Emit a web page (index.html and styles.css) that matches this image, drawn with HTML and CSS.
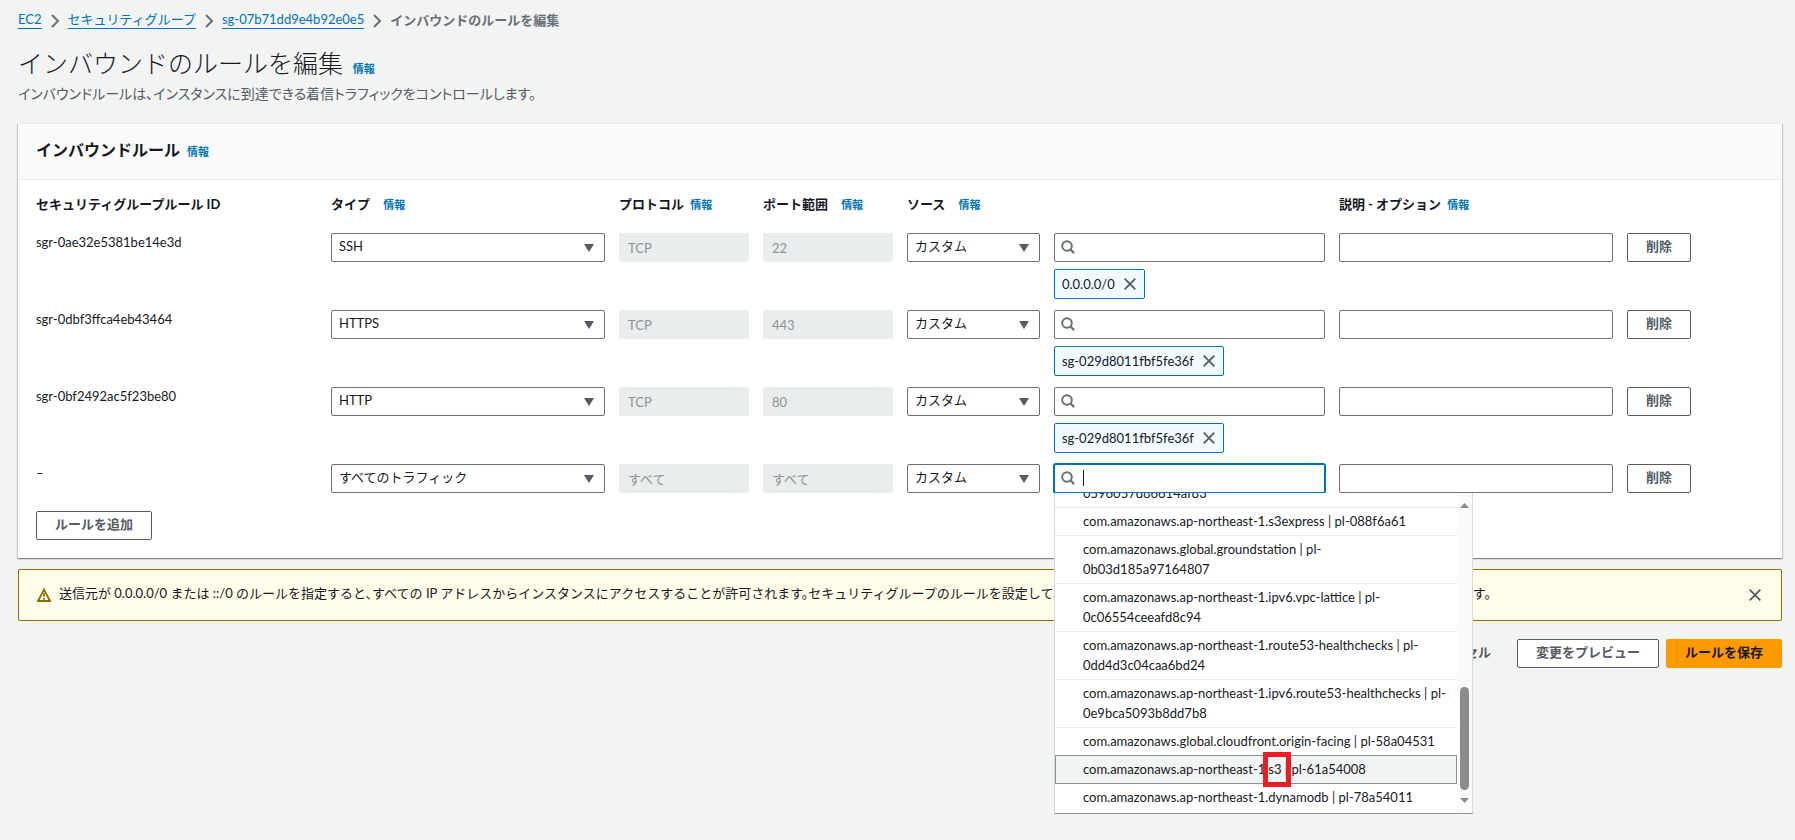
FILE: index.html
```html
<!DOCTYPE html>
<html lang="ja">
<head>
<meta charset="utf-8">
<meta name="viewport" content="width=device-width, initial-scale=1">
<title>インバウンドのルールを編集</title>
<link rel="stylesheet" href="styles.css">
</head>
<body>
<svg class="defs" aria-hidden="true">
  <symbol id="chevron" viewBox="0 0 8 14"><path d="M1 1l6 6-6 6" fill="none" stroke="currentColor" stroke-width="2"/></symbol>
  <symbol id="caret" viewBox="0 0 10 8"><path d="M0 0h10L5 8z" fill="currentColor"/></symbol>
  <symbol id="search" viewBox="0 0 14 14"><circle cx="6" cy="6" r="4.8" fill="none" stroke="currentColor" stroke-width="2"/><path d="M9.3 9.300l3.800 3.800" fill="none" stroke="currentColor" stroke-width="2.200"/></symbol>
  <symbol id="close" viewBox="0 0 12 12"><path d="M.7.7l10.6 10.6M11.3.7L.7 11.3" fill="none" stroke="currentColor" stroke-width="1.8"/></symbol>
  <symbol id="warning" viewBox="0 0 14 14"><path d="M7 1.6L13 13H1z" fill="none" stroke="currentColor" stroke-width="1.8"/><path d="M7 5.2v3.6M7 10v1.8" fill="none" stroke="currentColor" stroke-width="1.8"/></symbol>
</svg>

<nav class="breadcrumbs" aria-label="パンくずリスト">
  <a href="#">EC2</a>
  <svg class="chevron"><use href="#chevron"/></svg>
  <a href="#">セキュリティグループ</a>
  <svg class="chevron"><use href="#chevron"/></svg>
  <a href="#">sg-07b71dd9e4b92e0e5</a>
  <svg class="chevron"><use href="#chevron"/></svg>
  <span class="current">インバウンドのルールを編集</span>
</nav>

<main>
  <header class="page-header">
    <h1>インバウンドのルールを編集 <a class="info" href="#">情報</a></h1>
    <p>インバウンドルールは、インスタンスに到達できる着信トラフィックをコントロールします。</p>
  </header>

  <section class="card">
    <h2>インバウンドルール <a class="info" href="#">情報</a></h2>
    <div class="card-body">
      <table class="rules">
        <colgroup>
          <col class="c-id"><col class="c-type"><col class="c-short"><col class="c-short"><col class="c-source"><col class="c-search"><col class="c-type"><col class="c-action"><col>
        </colgroup>
        <thead>
          <tr>
            <th>セキュリティグループルール ID</th>
            <th>タイプ <a class="info wide" href="#">情報</a></th>
            <th>プロトコル <a class="info" href="#">情報</a></th>
            <th>ポート範囲 <a class="info wide" href="#">情報</a></th>
            <th colspan="2">ソース <a class="info wide" href="#">情報</a></th>
            <th>説明 - オプション <a class="info" href="#">情報</a></th>
            <td colspan="2"></td>
          </tr>
        </thead>
        <tbody>
          <tr>
            <td>sgr-0ae32e5381be14e3d</td>
            <td><div class="field"><select aria-label="タイプ"><option>SSH</option></select><svg class="caret"><use href="#caret"/></svg></div></td>
            <td><input class="input" aria-label="プロトコル" value="TCP" disabled></td>
            <td><input class="input" aria-label="ポート範囲" value="22" disabled></td>
            <td><div class="field"><select aria-label="ソース"><option>カスタム</option></select><svg class="caret"><use href="#caret"/></svg></div></td>
            <td>
              <div class="field"><input class="input search" type="text" aria-label="ソースを検索"><svg class="glass"><use href="#search"/></svg></div>
              <span class="token">0.0.0.0/0<button type="button" aria-label="0.0.0.0/0 を削除"><svg><use href="#close"/></svg></button></span>
            </td>
            <td><input class="input" type="text" aria-label="説明"></td>
            <td><button class="button" type="button">削除</button></td>
            <td></td>
          </tr>
          <tr>
            <td>sgr-0dbf3ffca4eb43464</td>
            <td><div class="field"><select aria-label="タイプ"><option>HTTPS</option></select><svg class="caret"><use href="#caret"/></svg></div></td>
            <td><input class="input" aria-label="プロトコル" value="TCP" disabled></td>
            <td><input class="input" aria-label="ポート範囲" value="443" disabled></td>
            <td><div class="field"><select aria-label="ソース"><option>カスタム</option></select><svg class="caret"><use href="#caret"/></svg></div></td>
            <td>
              <div class="field"><input class="input search" type="text" aria-label="ソースを検索"><svg class="glass"><use href="#search"/></svg></div>
              <span class="token">sg-029d8011fbf5fe36f<button type="button" aria-label="sg-029d8011fbf5fe36f を削除"><svg><use href="#close"/></svg></button></span>
            </td>
            <td><input class="input" type="text" aria-label="説明"></td>
            <td><button class="button" type="button">削除</button></td>
            <td></td>
          </tr>
          <tr>
            <td>sgr-0bf2492ac5f23be80</td>
            <td><div class="field"><select aria-label="タイプ"><option>HTTP</option></select><svg class="caret"><use href="#caret"/></svg></div></td>
            <td><input class="input" aria-label="プロトコル" value="TCP" disabled></td>
            <td><input class="input" aria-label="ポート範囲" value="80" disabled></td>
            <td><div class="field"><select aria-label="ソース"><option>カスタム</option></select><svg class="caret"><use href="#caret"/></svg></div></td>
            <td>
              <div class="field"><input class="input search" type="text" aria-label="ソースを検索"><svg class="glass"><use href="#search"/></svg></div>
              <span class="token">sg-029d8011fbf5fe36f<button type="button" aria-label="sg-029d8011fbf5fe36f を削除"><svg><use href="#close"/></svg></button></span>
            </td>
            <td><input class="input" type="text" aria-label="説明"></td>
            <td><button class="button" type="button">削除</button></td>
            <td></td>
          </tr>
          <tr>
            <td>–</td>
            <td><div class="field"><select aria-label="タイプ"><option>すべてのトラフィック</option></select><svg class="caret"><use href="#caret"/></svg></div></td>
            <td><input class="input" aria-label="プロトコル" value="すべて" disabled></td>
            <td><input class="input" aria-label="ポート範囲" value="すべて" disabled></td>
            <td><div class="field"><select aria-label="ソース"><option>カスタム</option></select><svg class="caret"><use href="#caret"/></svg></div></td>
            <td>
              <div class="field active">
                <input class="input search" type="text" aria-label="ソースを検索"><svg class="glass"><use href="#search"/></svg>
                <span class="text-cursor"></span>
                <div class="dropdown">
                  <ul role="listbox" aria-label="プレフィックスリスト">
                    <li role="option">0596057d86614af83</li>
                    <li role="option">com.amazonaws.ap-northeast-1.s3express | pl-088f6a61</li>
                    <li role="option">com.amazonaws.global.groundstation | pl-<br>0b03d185a97164807</li>
                    <li role="option">com.amazonaws.ap-northeast-1.ipv6.vpc-lattice | pl-<br>0c06554ceeafd8c94</li>
                    <li role="option">com.amazonaws.ap-northeast-1.route53-healthchecks | pl-<br>0dd4d3c04caa6bd24</li>
                    <li role="option">com.amazonaws.ap-northeast-1.ipv6.route53-healthchecks | pl-<br>0e9bca5093b8dd7b8</li>
                    <li role="option">com.amazonaws.global.cloudfront.origin-facing | pl-58a04531</li>
                    <li role="option" class="selected" aria-selected="true">com.amazonaws.ap-northeast-1.<span class="marked">s3</span> | pl-61a54008</li>
                    <li role="option">com.amazonaws.ap-northeast-1.dynamodb | pl-78a54011</li>
                  </ul>
                  <div class="scrollbar">
                    <svg viewBox="0 0 9 5"><path d="M0 5L4.500 0 9 5z"/></svg>
                    <span class="thumb"></span>
                    <svg viewBox="0 0 9 5"><path d="M0 0l4.500 5L9 0z"/></svg>
                  </div>
                </div>
              </div>
            </td>
            <td><input class="input" type="text" aria-label="説明"></td>
            <td><button class="button" type="button">削除</button></td>
            <td></td>
          </tr>
        </tbody>
      </table>
      <button class="button add" type="button">ルールを追加</button>
    </div>
  </section>

  <div class="alert" role="alert">
    <svg class="warning"><use href="#warning"/></svg>
    <p>送信元が 0.0.0.0/0 または ::/0 のルールを指定すると、すべての IP アドレスからインスタンスにアクセスすることが許可されます。セキュリティグループのルールを設定して、既知の IP アドレスからのアクセスのみを、許可することをお勧め致します。</p>
    <button class="dismiss" type="button" aria-label="閉じる"><svg><use href="#close"/></svg></button>
  </div>

  <div class="actions">
    <button class="button plain" type="button">キャンセル</button>
    <button class="button" type="button">変更をプレビュー</button>
    <button class="button primary" type="button">ルールを保存</button>
  </div>
</main>
</body>
</html>
```
FILE: styles.css
```css
* { box-sizing: border-box; }

body {
  margin: 0;
  min-height: 100vh;
  padding: 10px 13px 24px 18px;
  background: #f2f3f3;
  color: #16191f;
  font: 13px/18px Lato, "Noto Sans CJK JP", sans-serif;
}

input, select, button { font: inherit; color: inherit; }
h1, h2, p, ul { margin: 0; padding: 0; }
a { color: #0073bb; text-decoration: none; }
svg { display: block; flex: none; }
.defs { position: absolute; width: 0; height: 0; }

/* Breadcrumbs */
.breadcrumbs { display: flex; align-items: center; gap: 9px; height: 20px; color: #687078; }
.breadcrumbs a { line-height: 17px; border-bottom: 1px solid #0073bb; }
.chevron { width: 8px; height: 14px; margin-top: 2px; }
.current { font-weight: 700; }

/* Page header */
.page-header { padding: 15px 0 20px; }
h1 { font-size: 25px; line-height: 36px; font-weight: 300; }
.page-header p {
  padding-top: 3px;
  font-size: 14px;
  line-height: 19px;
  font-feature-settings: "palt";
  color: #545b64;
}
.info { margin-left: 3px; font-size: 11px; line-height: 1; font-weight: 700; }
.info.wide { margin-left: 10px; }

/* Card */
.card {
  background: #fff;
  border-top: 1px solid #eaeded;
  box-shadow: 0 1px 1px 0 rgba(0, 28, 36, .3), 1px 1px 1px 0 rgba(0, 28, 36, .15), -1px 1px 1px 0 rgba(0, 28, 36, .15);
}
h2 {
  padding: 13px 18px 17px;
  font-size: 16px;
  line-height: 25px;
  background: #fafafa;
  border-bottom: 1px solid #eaeded;
}
.card-body { padding: 0 18px 18px; }

/* Rules table */
.rules { width: 100%; table-layout: fixed; border-collapse: collapse; }
.c-id { width: 17.07%; }
.c-type { width: 16.67%; }
.c-short { width: 8.33%; }
.c-source { width: 8.51%; }
.c-search { width: 16.49%; }
.c-action { width: 4.51%; }
.rules th { height: 53px; padding: 0 0 5px; text-align: left; white-space: nowrap; }
.rules td { padding: 0 14px 11px 0; vertical-align: top; }

.field { position: relative; }
select, .input {
  display: block;
  width: 100%;
  height: 29px;
  padding: 0 8px;
  border: 1px solid #687078;
  border-radius: 2px;
  background: #fff;
  appearance: none;
}
select { padding: 0 7px 3px; }
.input:disabled { background: #eaeded; border-color: #eaeded; color: #879596; }
.input.search { padding-left: 29px; }
.caret { position: absolute; top: 11px; right: 11px; width: 10px; height: 8px; color: #545b64; pointer-events: none; }
.glass { position: absolute; top: 7px; left: 7px; width: 14px; height: 14px; color: #687078; }

.active .input { border-color: #0073bb; box-shadow: 0 0 0 1px #0073bb; }
.text-cursor { position: absolute; top: 6px; left: 29px; width: 1px; height: 16px; background: #16191f; }

.token {
  display: inline-flex;
  align-items: center;
  gap: 9px;
  height: 30px;
  margin-top: 7px;
  padding: 0 8px 1px 7px;
  border: 1px solid #0073bb;
  border-radius: 2px;
  background: #f1faff;
  vertical-align: top;
}
.token button, .dismiss { padding: 0; border: 0; background: none; color: #545b64; }
.token svg, .dismiss svg { width: 12px; height: 12px; }

/* Source suggestions */
.dropdown {
  position: absolute;
  z-index: 1;
  top: 29px;
  left: 0;
  display: flex;
  width: 419px;
  height: 321px;
  overflow: hidden;
  background: #fff;
  border: solid #d5dbdb;
  border-width: 0 1px 1px;
  border-bottom-color: #879596;
}
.dropdown ul { flex: 1; display: flex; flex-direction: column; justify-content: flex-end; list-style: none; padding-bottom: 1px; }
.dropdown li { padding: 3px 0 4px 28px; line-height: 20px; border-bottom: 1px solid #eaeded; white-space: nowrap; }
.dropdown li:last-child { border-bottom-color: transparent; }
.dropdown .selected { margin-top: -1px; padding-left: 27px; background: #f2f3f3; border: 1px solid #879596; }
.marked { position: relative; }
.marked::after { content: ""; position: absolute; inset: -9px -9px -10px -5px; border: 5px solid #ed1c24; }

.scrollbar {
  display: flex;
  flex-direction: column;
  align-items: center;
  width: 15px;
  padding: 10px 0;
  background: #fafafa;
}
.scrollbar svg { width: 9px; height: 5px; fill: #8b8b8b; }
.thumb { width: 9px; height: 103px; margin: auto 0 8px; border-radius: 5px; background: #8b8b8b; }

/* Buttons */
.button {
  height: 29px;
  padding: 0 18px 3px;
  border: 1px solid #545b64;
  border-radius: 2px;
  background: #fff;
  color: #545b64;
  font-weight: 700;
  white-space: nowrap;
}
.add { display: block; margin-top: 7px; }
.plain { background: none; border-color: transparent; }
.primary { background: #f90; border-color: #f90; color: #16191f; }

/* Alert */
.alert {
  display: flex;
  align-items: center;
  gap: 8px;
  min-height: 52px;
  margin-top: 11px;
  padding: 0 20px 0 18px;
  border: 1px solid #906806;
  border-radius: 2px;
  background: #fffce9;
}
.alert p { flex: 1; padding-bottom: 4px; font-feature-settings: "halt"; }
.warning { width: 14px; height: 14px; color: #906806; }

.actions { display: flex; justify-content: flex-end; gap: 7px; margin-top: 18px; }
```
